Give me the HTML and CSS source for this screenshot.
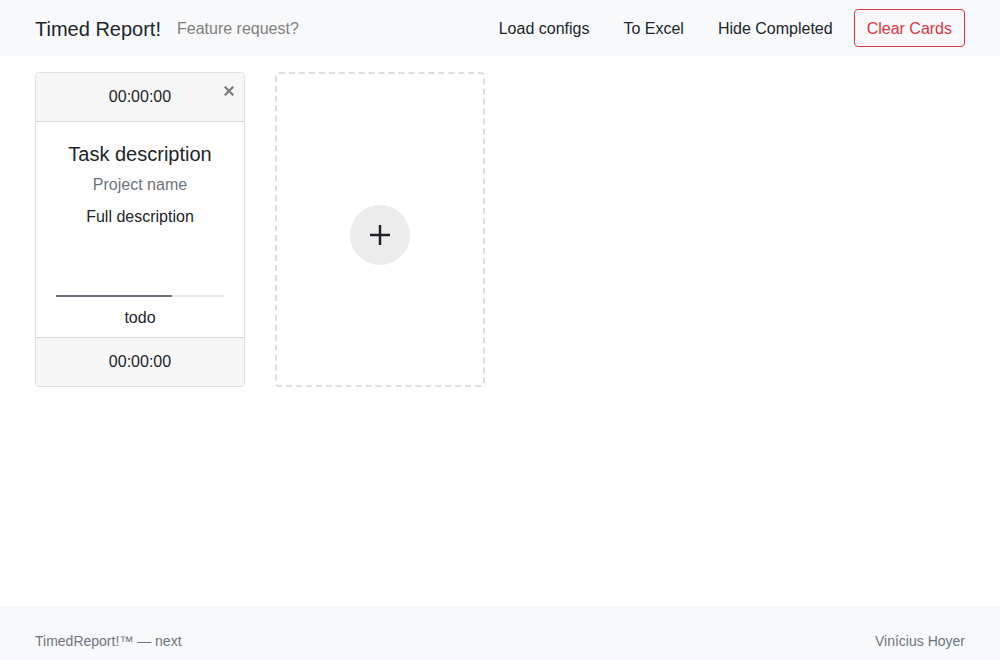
FILE: index.html
```html
<!DOCTYPE html>
<html>
<head>
<meta charset="utf-8">
<link rel="stylesheet" href="styles.css">
</head>
<body>
<nav class="navbar">
  <div class="container nav-inner">
    <div class="nav-left">
      <span class="brand">Timed Report!</span>
      <a class="nav-muted">Feature request?</a>
    </div>
    <div class="nav-right">
      <a class="nav-link">Load configs</a>
      <a class="nav-link">To Excel</a>
      <a class="nav-link">Hide Completed</a>
      <button class="btn-danger-outline">Clear Cards</button>
    </div>
  </div>
</nav>
<main class="container cards">
  <div class="card">
    <div class="card-header">00:00:00<span class="close">
      <svg width="10" height="10" viewBox="0 0 10 10"><path d="M1.5 1.5L8.5 8.5M8.5 1.5L1.5 8.5" stroke="#7a7a7a" stroke-width="2.2" stroke-linecap="square"/></svg>
    </span></div>
    <div class="card-body">
      <div class="title">Task description</div>
      <div class="project">Project name</div>
      <div class="desc">Full description</div>
      <div class="spacer"></div>
      <div class="progress"><div class="progress-bar" style="width:69%"></div></div>
      <div class="status">todo</div>
    </div>
    <div class="card-footer">00:00:00</div>
  </div>
  <div class="card-add">
    <div class="add-btn">
      <svg width="20" height="20" viewBox="0 0 20 20"><path d="M10 0V20M0 10H20" stroke="#212529" stroke-width="2.5"/></svg>
    </div>
  </div>
</main>
<footer class="footer">
  <div class="container footer-inner">
    <span>TimedReport!™ — next</span>
    <span>Vinícius Hoyer</span>
  </div>
</footer>
</body>
</html>
```
FILE: styles.css
```css
* { box-sizing: border-box; }
html, body { margin: 0; padding: 0; }
body {
  font-family: "Liberation Sans", Arial, sans-serif;
  font-size: 16px;
  line-height: 1.5;
  color: #212529;
  background: #fff;
  height: 660px;
  display: flex;
  flex-direction: column;
  overflow: hidden;
}
.container { width: 930px; margin: 0 auto; }
.navbar { background: #f8f9fa; height: 56px; display: flex; align-items: center; flex: none; }
.nav-inner { display: flex; justify-content: space-between; align-items: center; }
.nav-left { display: flex; align-items: center; padding-top: 2px; }
.brand { font-size: 20px; color: #212529; margin-right: 16px; line-height: 30px; }
.nav-muted { color: #7f7f7f; font-size: 16px; }
.nav-right { display: flex; align-items: center; }
.nav-link { color: #212529; padding: 9px 17px 7px; line-height: 24px; }
.btn-danger-outline {
  font-family: inherit;
  font-size: 16px;
  line-height: 24px;
  color: #dc3545;
  background: transparent;
  border: 1px solid #dc3545;
  border-radius: 4px;
  padding: 7px 12px 5px;
  height: 38px;
  margin-left: 4px;
}
.cards { display: flex; gap: 30px; padding-top: 16px; flex: 1; align-items: flex-start; }
.card {
  width: 210px;
  height: 315px;
  border: 1px solid rgba(0,0,0,.125);
  border-radius: 4px;
  display: flex;
  flex-direction: column;
  text-align: center;
  overflow: hidden;
}
.card-header {
  position: relative;
  background: #f7f7f7;
  border-bottom: 1px solid rgba(0,0,0,.125);
  height: 49px;
  line-height: 48px;
}
.close { position: absolute; right: 10px; top: 13px; line-height: 0; }
.card-body { flex: 1; padding: 18px 20px 0; display: flex; flex-direction: column; }
.title { font-size: 20px; line-height: 28px; margin-bottom: 5px; }
.project { color: #6c757d; line-height: 24px; }
.desc { line-height: 24px; margin-top: 8px; }
.spacer { flex: 1; }
.progress { height: 2px; background: #e9ecef; margin-bottom: 9px; }
.progress-bar { height: 2px; background: #6c757d; }
.status { line-height: 24px; margin-bottom: 7px; }
.card-footer {
  background: #f7f7f7;
  border-top: 1px solid rgba(0,0,0,.125);
  height: 49px;
  line-height: 48px;
}
.card-add {
  width: 210px;
  height: 315px;
  border: 2px dashed #dedede;
  border-radius: 4px;
  display: flex;
  align-items: center;
  justify-content: center;
}
.add-btn {
  width: 60px; height: 60px; border-radius: 50%;
  background: #ececec;
  display: flex; align-items: center; justify-content: center;
  margin-top: 11px;
}
.footer { background: #f8f9fa; height: 53px; flex: none; padding-top: 24px; }
.footer-inner { display: flex; justify-content: space-between; font-size: 14px; color: #6c757d; line-height: 20px; }
```
